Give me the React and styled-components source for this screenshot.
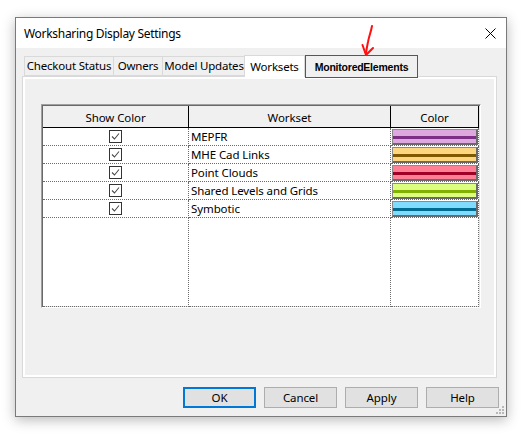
import React from 'react';
import styled, { createGlobalStyle } from 'styled-components';

const GlobalStyle = createGlobalStyle`
  body {
    margin: 0;
    background: #ffffff;
    font-family: "Noto Sans", "Open Sans", sans-serif;
    font-size: 11.5px;
    color: #000;
  }
`;

const Page = styled.div`
  width: 531px;
  height: 442px;
  padding: 17px 0 0 15px;
  box-sizing: border-box;
  position: relative;
`;

const Window = styled.div`
  width: 492px;
  height: 400px;
  box-sizing: border-box;
  border: 1px solid #7a7a7a;
  background: #f0f0f0;
  box-shadow: 0 3px 12px rgba(0, 0, 0, 0.28);
  display: flex;
  flex-direction: column;
  position: relative;
`;

const TitleBar = styled.div`
  height: 30px;
  background: #ffffff;
  display: flex;
  align-items: center;
  justify-content: space-between;
  padding: 0 10px 0 8px;
  flex-shrink: 0;
`;

const Title = styled.span`
  font-size: 12px;
  letter-spacing: -0.3px;
  margin-top: 1px;
`;

const Body = styled.div`
  flex: 1;
  display: flex;
  flex-direction: column;
  padding: 7px 0 0 6px;
`;

const TabStrip = styled.div`
  height: 21px;
  display: flex;
  align-items: flex-end;
  padding-left: 2px;
  position: relative;
  z-index: 1;
`;

const Tab = styled.div`
  width: ${({ $w }) => $w}px;
  height: ${({ $active }) => ($active ? 22 : 20)}px;
  margin-bottom: ${({ $active }) => ($active ? -1 : 0)}px;
  margin-left: ${({ $active }) => ($active ? -2 : 0)}px;
  box-sizing: border-box;
  border: 1px solid #d9d9d9;
  border-bottom: ${({ $active }) => ($active ? 'none' : '1px solid #d9d9d9')};
  border-left: ${({ $first, $active }) => ($first || $active ? '1px solid #d9d9d9' : 'none')};
  background: ${({ $active }) => ($active ? '#ffffff' : '#f0f0f0')};
  display: flex;
  align-items: center;
  justify-content: center;
  white-space: nowrap;
  letter-spacing: -0.2px;
  padding-bottom: 1px;
`;

const MarkedTab = styled.div`
  width: 113px;
  height: 23px;
  box-sizing: border-box;
  border: 1.5px solid #e21b1b;
  background: #f0f0f0;
  display: flex;
  align-items: center;
  justify-content: center;
  font-family: "Liberation Sans", sans-serif;
  font-weight: 700;
  font-size: 10.5px;
  letter-spacing: -0.2px;
  word-spacing: -3px;
  margin-bottom: -2px;
  padding-top: 1px;
`;

const Panel = styled.div`
  height: 302px;
  margin-right: 9px;
  box-sizing: border-box;
  border: 1px solid #d9d9d9;
  box-shadow: inset 2px 2px 0 #ffffff, inset -2px -2px 0 #ffffff;
  background: #f0f0f0;
  padding: 27px 0 0 18px;
`;

const GridFrame = styled.div`
  width: 440px;
  height: 204px;
  box-sizing: border-box;
  border-style: solid;
  border-width: 1px;
  border-color: #a0a0a0 #ffffff #ffffff #a0a0a0;
  box-shadow: inset 1px 1px 0 #696969, inset -1px -1px 0 #e3e3e3;
  background: #ffffff;
  padding: 1px 0 0 1px;
`;

const Grid = styled.div`
  display: grid;
  grid-template-columns: 146px 202px 88px;
  grid-template-rows: 22px repeat(5, 18px) 89px;
`;

const HeadCell = styled.div`
  background: #f0f0f0;
  border-bottom: 1px solid #000;
  border-right: 1px solid #000;
  display: flex;
  align-items: center;
  justify-content: center;
  letter-spacing: -0.1px;
  padding-top: 1px;
`;

const Cell = styled.div`
  border-bottom: 1px dotted #6b6b6b;
  border-right: 1px dotted #6b6b6b;
  display: flex;
  align-items: center;
  justify-content: ${({ $center }) => ($center ? 'center' : 'flex-start')};
  padding-left: ${({ $center }) => ($center ? 0 : 2)}px;
  letter-spacing: -0.1px;
  overflow: hidden;
  white-space: nowrap;
`;

const SwatchCell = styled.div`
  border-bottom: 1px dotted #6b6b6b;
  border-right: 1px dotted #6b6b6b;
  padding: 1px 0 0 1px;
  box-sizing: border-box;
`;

const Swatch = styled.div`
  height: 16px;
  box-sizing: border-box;
  border: 1px solid #8a8a8a;
  border-right: 2px solid #6a6a6a;
  border-bottom: 2px solid #6a6a6a;
  background: linear-gradient(
    to bottom,
    ${({ $fill }) => $fill} 0 6px,
    ${({ $line }) => $line} 6px 9px,
    ${({ $fill }) => $fill} 9px 100%
  );
`;

const Check = styled.span`
  width: 11px;
  height: 11px;
  border: 1px solid #333;
  display: flex;
  align-items: center;
  justify-content: center;
  background: #fff;
`;

const Footer = styled.div`
  display: flex;
  justify-content: flex-end;
  gap: 8px;
  padding: 9px 7px 0 0;
`;

const Button = styled.button`
  width: 73px;
  height: 21px;
  box-sizing: border-box;
  border: ${({ $default }) => ($default ? '2px solid #0078d7' : '1px solid #adadad')};
  background: #e1e1e1;
  font-family: "Noto Sans", "Open Sans", sans-serif;
  font-size: 11.5px;
  letter-spacing: -0.1px;
  color: #000;
  padding: 0;
  margin: 0;
`;

const Grip = styled.svg`
  position: absolute;
  right: 2px;
  bottom: 2px;
`;

const Arrow = styled.svg`
  position: absolute;
  left: 355px;
  top: 22px;
  z-index: 3;
`;

const worksets = [
  { name: 'MEPFR', fill: '#dca8dd', line: '#7d2f86' },
  { name: 'MHE Cad Links', fill: '#ffd680', line: '#7f5a00' },
  { name: 'Point Clouds', fill: '#ff8094', line: '#a00024' },
  { name: 'Shared Levels and Grids', fill: '#ddff80', line: '#80b000' },
  { name: 'Symbotic', fill: '#80dcff', line: '#006a90' },
];

const CheckBox = () => (
  <Check>
    <svg width="9" height="9" viewBox="0 0 9 9">
      <path d="M1 4.5 L3.5 7 L8 1.5" fill="none" stroke="#4a4a4a" strokeWidth="1.1" />
    </svg>
  </Check>
);

export default function App() {
  return (
    <Page>
      <GlobalStyle />
      <Window>
        <TitleBar>
          <Title>Worksharing Display Settings</Title>
          <svg width="11" height="11" viewBox="0 0 11 11">
            <path d="M0.5 0.5 L10.5 10.5 M10.5 0.5 L0.5 10.5" stroke="#000" strokeWidth="1" />
          </svg>
        </TitleBar>
        <Body>
          <TabStrip>
            <Tab $w={90} $first>Checkout Status</Tab>
            <Tab $w={49}>Owners</Tab>
            <Tab $w={83}>Model Updates</Tab>
            <Tab $w={61} $active>Worksets</Tab>
            <MarkedTab>Monitored Elements</MarkedTab>
          </TabStrip>
          <Panel>
            <GridFrame>
              <Grid>
                <HeadCell>Show Color</HeadCell>
                <HeadCell>Workset</HeadCell>
                <HeadCell>Color</HeadCell>
                {worksets.map((w) => (
                  <React.Fragment key={w.name}>
                    <Cell $center>
                      <CheckBox />
                    </Cell>
                    <Cell>{w.name}</Cell>
                    <SwatchCell>
                      <Swatch $fill={w.fill} $line={w.line} />
                    </SwatchCell>
                  </React.Fragment>
                ))}
                <Cell />
                <Cell />
                <Cell />
              </Grid>
            </GridFrame>
          </Panel>
          <Footer>
            <Button $default>OK</Button>
            <Button>Cancel</Button>
            <Button>Apply</Button>
            <Button>Help</Button>
          </Footer>
        </Body>
        <Grip width="8" height="8" viewBox="0 0 8 8">
          <g fill="#b8b8b8">
            <rect x="6" y="0" width="2" height="2" />
            <rect x="3" y="3" width="2" height="2" />
            <rect x="6" y="3" width="2" height="2" />
            <rect x="0" y="6" width="2" height="2" />
            <rect x="3" y="6" width="2" height="2" />
            <rect x="6" y="6" width="2" height="2" />
          </g>
        </Grip>
      </Window>
      <Arrow width="30" height="40" viewBox="0 0 30 40">
        <path d="M17 4 C16 10 14 14 13 20 C12 25 11 29 11 33" fill="none" stroke="#ff1010" strokeWidth="2" strokeLinecap="round" />
        <path d="M7.5 23 L11 33 L18 26" fill="none" stroke="#ff1010" strokeWidth="2" strokeLinecap="round" strokeLinejoin="round" />
      </Arrow>
    </Page>
  );
}
